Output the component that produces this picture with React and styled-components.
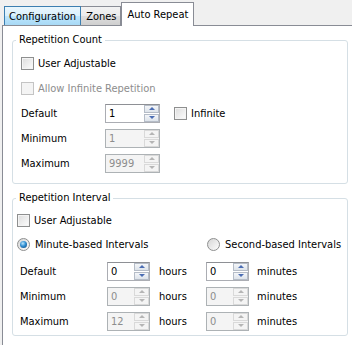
import React from 'react';
import styled, { createGlobalStyle, css } from 'styled-components';

const GlobalStyle = createGlobalStyle`
  html, body {
    margin: 0;
    padding: 0;
  }
  body {
    background: #f0f0f0;
    font-family: "DejaVu Sans Condensed", "DejaVu Sans", sans-serif;
    font-size: 11px;
    color: #000;
  }
`

const Window = styled.div`
  width: 352px;
  height: 345px;
  overflow: hidden;
  background: #f0f0f0;
`
const TabStrip = styled.div`
  display: flex;
  align-items: flex-end;
  height: 25px;
  padding-left: 4px;
  position: relative;
  z-index: 1;
`
const tabLook = ({ kind }) => {
  if (kind == 'active') {
    return css`
      height: 24px;
      margin-bottom: -1px;
      background: #fff;
      border: 1px solid #898c95;
      border-bottom: none;
      padding: 0 5px;
    `;
  }
  else if (kind == 'hover') {
    return css`
      height: 19px;
      background: linear-gradient(#eaf6fd, #d9f0fc 50%, #bee6fd 51%, #a7d9f5);
      border: 1px solid #3c7fb1;
      border-bottom: none;
      padding: 0 4px;
    `;
  }
  return css`
    height: 19px;
    background: linear-gradient(#f2f2f2, #ebebeb 50%, #dddddd 51%, #cfcfcf);
    border: 1px solid #898c95;
    border-bottom: none;
    border-left: none;
    padding: 0 4px 0 5px;
  `;
}
const Tab = styled.div`
  display: flex;
  align-items: center;
  box-sizing: border-box;
  ${tabLook}
`
const Panel = styled.div`
  margin-left: 2px;
  height: 320px;
  background: #fff;
  border-top: 1px solid #898c95;
  border-left: 1px solid #898c95;
  padding-top: 7px;
`
const Group = styled.fieldset`
  margin: ${({ top }) => top || 0}px 4px 0 9px;
  padding: 0;
  border: 1px solid #d5dfe5;
  border-radius: 3px;
`
const Legend = styled.legend`
  margin-left: 3px;
  padding: 0 3px;
  line-height: 14px;
  color: #000;
`
const Body = styled.div`
  display: flex;
  flex-direction: column;
  gap: ${({ gap }) => gap}px;
  padding: ${({ top }) => top}px 0 ${({ bottom }) => bottom}px ${({ indent }) => indent}px;
`
const Row = styled.div`
  display: flex;
  align-items: center;
  height: 20px;
  white-space: nowrap;
`
const CheckLabel = styled.label`
  display: flex;
  align-items: center;
  gap: ${({ gap }) => gap || 4}px;
  width: ${({ width }) => width ? `${width}px` : 'auto'};
  flex-shrink: 0;
  white-space: nowrap;
  color: ${({ disabled }) => disabled ? '#8d8d8d' : '#000'};
`
const Box = styled.span`
  width: 13px;
  height: 13px;
  box-sizing: border-box;
  border: 1px solid ${({ disabled }) => disabled ? '#c4c4c4' : '#8e8f8f'};
  background: ${({ disabled }) => disabled
    ? '#f4f4f4'
    : 'linear-gradient(135deg, #dcdcdc, #fdfdfd)'};
  box-shadow: inset 0 0 0 1px #f4f4f4;
`
const Radio = styled.span`
  width: 13px;
  height: 13px;
  box-sizing: border-box;
  border-radius: 50%;
  border: 1px solid #8e8f8f;
  background: linear-gradient(135deg, #d6d6d6, #fdfdfd);
  display: flex;
  align-items: center;
  justify-content: center;
  &::after {
    content: '';
    display: ${({ checked }) => checked ? 'block' : 'none'};
    width: 7px;
    height: 7px;
    border-radius: 50%;
    background: radial-gradient(circle at 40% 35%, #b9e4fb, #2f8ed2 45%, #0d3f72);
  }
`
const Field = styled.div`
  display: grid;
  grid-template-columns: ${({ cols }) => cols};
  grid-auto-rows: 20px;
  row-gap: 5px;
  align-items: center;
  margin-top: ${({ top }) => top || 0}px;
  padding-left: ${({ left }) => left || 0}px;
`
const SpinBox = styled.div`
  display: flex;
  width: ${({ width }) => width}px;
  height: 19px;
  box-sizing: border-box;
  border: 1px solid ${({ disabled }) => disabled ? '#adb2b5' : '#abadb3'};
  border-top-color: ${({ disabled }) => disabled ? '#adb2b5' : '#8e9095'};
  background: ${({ disabled }) => disabled ? '#f4f4f4' : '#fff'};
`
const SpinText = styled.span`
  flex: 1;
  padding-left: 3px;
  line-height: 17px;
  color: ${({ disabled }) => disabled ? '#8d8d8d' : '#000'};
`
const SpinButtons = styled.div`
  width: 15px;
  display: flex;
  flex-direction: column;
  gap: 1px;
`
const SpinButton = styled.div`
  flex: 1;
  box-sizing: border-box;
  border: 1px solid ${({ disabled }) => disabled ? '#d9d9d9' : '#b5bcc7'};
  background: ${({ disabled }) => disabled
    ? '#f4f4f4'
    : 'linear-gradient(#f4f6f9, #dde3ea)'};
  display: flex;
  align-items: center;
  justify-content: center;
  &::after {
    content: '';
    width: 0;
    height: 0;
    border-left: 3px solid transparent;
    border-right: 3px solid transparent;
    ${({ dir, disabled }) => dir == 'up'
      ? `border-bottom: 3px solid ${disabled ? '#b5b5b5' : '#4b6db3'};`
      : `border-top: 3px solid ${disabled ? '#b5b5b5' : '#4b6db3'};`}
  }
`
const Unit = styled.span`
  padding-left: ${({ left }) => left}px;
  color: #000;
`
const Cell = styled.span`
  padding-left: ${({ left }) => left || 0}px;
`

let Check = ({ label, disabled }) => (
  <CheckLabel disabled={disabled}>
    <Box disabled={disabled} />
    {label}
  </CheckLabel>
)

let Spin = ({ value, width, disabled }) => (
  <SpinBox width={width} disabled={disabled}>
    <SpinText disabled={disabled}>{value}</SpinText>
    <SpinButtons>
      <SpinButton dir='up' disabled={disabled} />
      <SpinButton dir='down' disabled={disabled} />
    </SpinButtons>
  </SpinBox>
)

const intervals = [
  { label: 'Default', hours: '0', minutes: '0', disabled: false },
  { label: 'Minimum', hours: '0', minutes: '0', disabled: true },
  { label: 'Maximum', hours: '12', minutes: '0', disabled: true },
];

export default function App() {
  return (
    <Window>
      <GlobalStyle />
      <TabStrip>
        <Tab kind='hover'>Configuration</Tab>
        <Tab>Zones</Tab>
        <Tab kind='active'>Auto Repeat</Tab>
      </TabStrip>
      <Panel>
        <Group>
          <Legend>Repetition Count</Legend>
          <Body indent={8} gap={5} top={6} bottom={10}>
            <Row><Check label='User Adjustable' /></Row>
            <Row><Check label='Allow Infinite Repetition' disabled /></Row>
            <Field cols='84px 55px auto' left={-1}>
              <Cell>Default</Cell>
              <Spin value='1' width={55} />
              <Cell left={14}><Check label='Infinite' /></Cell>
              <Cell>Minimum</Cell>
              <Spin value='1' width={55} disabled />
              <Cell />
              <Cell>Maximum</Cell>
              <Spin value='9999' width={55} disabled />
              <Cell />
            </Field>
          </Body>
        </Group>
        <Group top={7}>
          <Legend>Repetition Interval</Legend>
          <Body indent={4} gap={4} top={5} bottom={4}>
            <Row><Check label='User Adjustable' /></Row>
            <Row>
              <CheckLabel width={190} gap={5}>
                <Radio checked />
                Minute-based Intervals
              </CheckLabel>
              <CheckLabel gap={5}>
                <Radio />
                Second-based Intervals
              </CheckLabel>
            </Row>
            <Field cols='87px 43px 56px 43px auto' top={3} left={3}>
              {intervals.map((row) => (
                <React.Fragment key={row.label}>
                  <Cell>{row.label}</Cell>
                  <Spin value={row.hours} width={43} disabled={row.disabled} />
                  <Unit left={9}>hours</Unit>
                  <Spin value={row.minutes} width={43} disabled={row.disabled} />
                  <Unit left={8}>minutes</Unit>
                </React.Fragment>
              ))}
            </Field>
          </Body>
        </Group>
      </Panel>
    </Window>
  );
}
